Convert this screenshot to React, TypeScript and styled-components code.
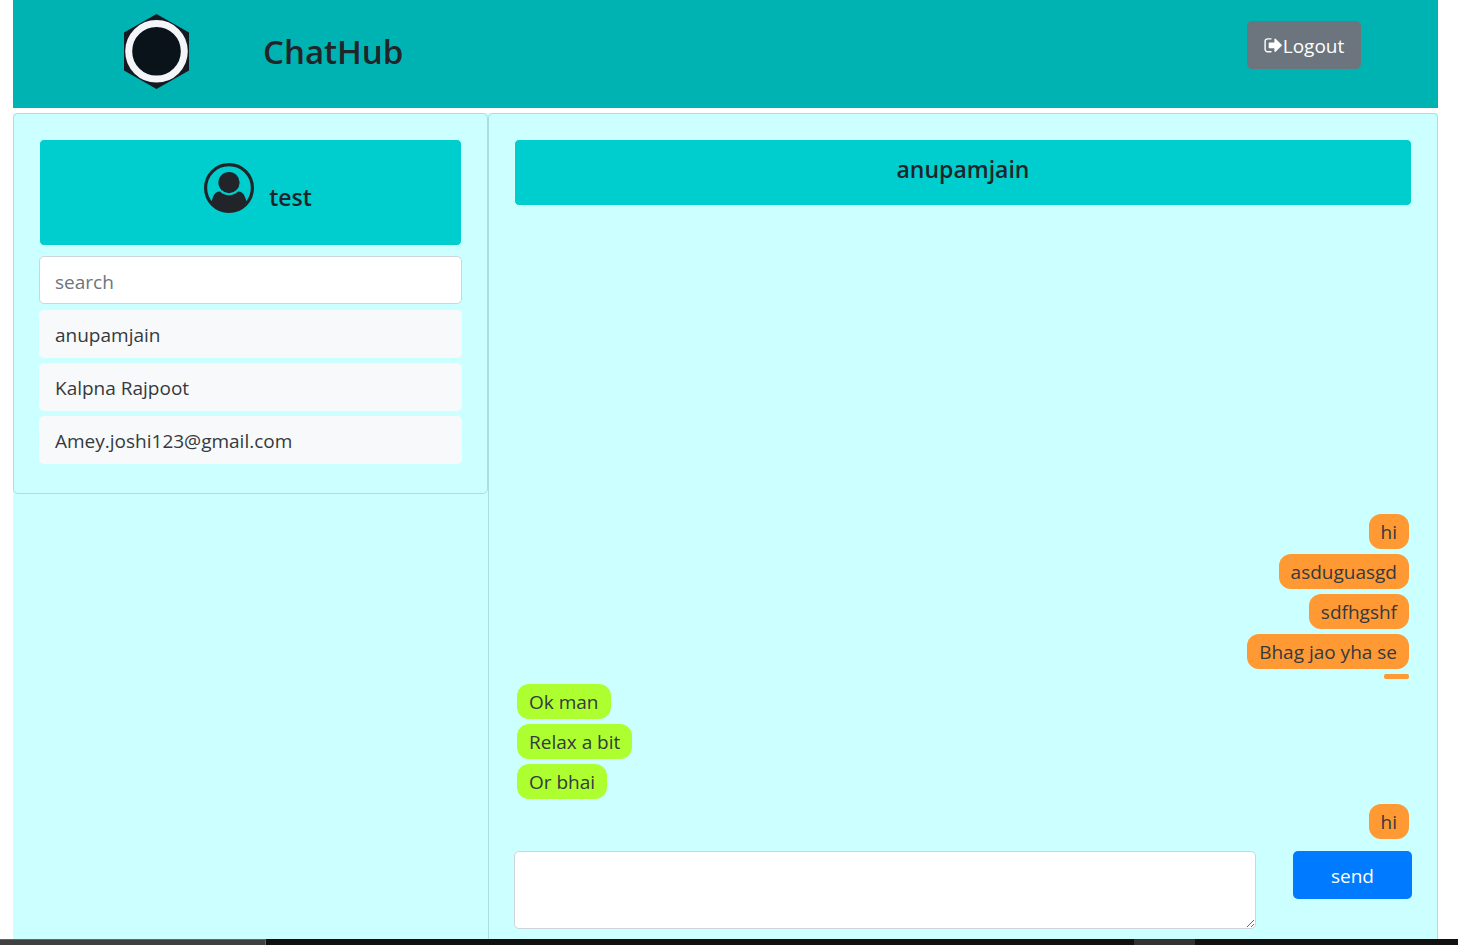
import React, { useState } from 'react';
import styled, { createGlobalStyle } from 'styled-components';

const GlobalStyle = createGlobalStyle`
  *, *::before, *::after { box-sizing: border-box; }
  body {
    margin: 0;
    background: #fff;
    color: #212529;
    font-family: 'Segoe UI', 'Open Sans', 'Noto Sans', sans-serif;
    font-size: 19px;
    line-height: 30px;
  }
  h1, h2, ul { margin: 0; padding: 0; }
  button, input, textarea { font: inherit; }
`;

const Page = styled.div`
  height: 100vh;
  display: flex;
  flex-direction: column;
  overflow: hidden;
`;

const Container = styled.div`
  flex: 1;
  min-height: 0;
  display: flex;
  flex-direction: column;
  gap: 5px;
  margin: 0 20px 0 13px;
`;

const Header = styled.header`
  display: flex;
  align-items: flex-start;
  height: 108px;
  flex-shrink: 0;
  padding: 14px 77px 0 110px;
  background: #00b3b3;
`;

const Logo = styled.svg`
  width: 67px;
  height: 75px;
`;

const Brand = styled.h1`
  margin: 16px auto 0 73px;
  font-size: 33px;
  font-weight: 600;
  line-height: 44px;
`;

const Button = styled.button<{ $tone: string; $width: number }>`
  display: flex;
  align-items: center;
  justify-content: center;
  width: ${(p) => p.$width}px;
  height: 48px;
  padding: 2px 0 0;
  border: 0;
  border-radius: 5px;
  background: ${(p) => p.$tone};
  color: #fff;
`;

const LogoutSlot = styled.div`
  padding-top: 7px;
`;

const Columns = styled.div`
  flex: 1;
  min-height: 0;
  display: grid;
  grid-template-columns: 1fr 2fr;
  align-items: start;
  background: #cff;
`;

const Card = styled.section`
  padding: 25px;
  border: 1px solid #a9dfe0;
  border-radius: 5px;
  background: #cff;
`;

const Sidebar = styled(Card)`
  padding-bottom: 29px;
`;

const Chat = styled(Card)`
  height: 100%;
  display: flex;
  flex-direction: column;
  padding-bottom: 10px;
  border-bottom: 0;
  border-radius: 5px 5px 0 0;
`;

const Banner = styled.div<{ $height: number }>`
  display: flex;
  justify-content: center;
  flex-shrink: 0;
  height: ${(p) => p.$height}px;
  border: 1px solid #d9ffff;
  border-radius: 5px;
  background: #00cdcd;
`;

const Profile = styled(Banner)`
  align-items: flex-start;
  gap: 15px;
  padding: 23px 0 0 15px;
`;

const Name = styled.h2`
  font-size: 23px;
  font-weight: 600;
  line-height: 30px;
`;

const ProfileName = styled(Name)`
  padding-top: 19px;
`;

const PeerName = styled(Name)`
  padding-top: 14px;
`;

const Search = styled.input`
  display: block;
  width: 100%;
  height: 48px;
  margin-top: 10px;
  padding: 4px 15px 0;
  border: 1px solid #ced4da;
  border-radius: 5px;
  background: #fff;
  color: #495057;
  &::placeholder { color: #6c757d; opacity: 1; }
`;

const Contacts = styled.ul`
  display: grid;
  gap: 5px;
  padding-top: 6px;
  list-style: none;
`;

const Contact = styled.button`
  display: block;
  width: 100%;
  height: 48px;
  padding: 1px 16px 0;
  border: 0;
  border-radius: 5px;
  background: #f8f9fa;
  color: #343a40;
  text-align: left;
`;

const Messages = styled.div`
  flex: 1;
  min-height: 0;
  display: flex;
  flex-direction: column;
  justify-content: flex-end;
  gap: 5px;
  padding: 0 3px 12px;
`;

const Bubble = styled.div<{ $mine?: boolean }>`
  align-self: ${(p) => (p.$mine ? 'flex-end' : 'flex-start')};
  flex-shrink: 0;
  min-width: 25px;
  padding: 3px 12px 2px;
  border-radius: 12px;
  background: ${(p) => (p.$mine ? '#ff9933' : '#adff2f')};
  color: #343a40;
  &:empty { border-radius: 2px; }
`;

const Composer = styled.form`
  display: flex;
  align-items: flex-start;
  justify-content: space-between;
  gap: 37px;
`;

const Draft = styled.textarea`
  display: block;
  flex: 1;
  min-width: 0;
  height: 78px;
  padding: 8px 15px;
  border: 1px solid #ced4da;
  border-radius: 5px;
  background: #fff;
  resize: vertical;
`;

const Taskbar = styled.footer`
  display: grid;
  grid-template-columns: 266px 1fr 61px 263px;
  flex-shrink: 0;
  height: 6px;
  background: #101010;
`;

const TaskItem = styled.div<{ $active?: boolean }>`
  grid-column: ${(p) => (p.$active ? 1 : 3)};
  background: ${(p) => (p.$active ? '#404040' : '#333')};
  border: solid #666;
  border-width: ${(p) => (p.$active ? '1px 1px 0 0' : '0')};
`;

const contacts = ['anupamjain', 'Kalpna Rajpoot', 'Amey.joshi123@gmail.com'];

const messages = [
  { text: 'hi', mine: true },
  { text: 'asduguasgd', mine: true },
  { text: 'sdfhgshf', mine: true },
  { text: 'Bhag jao yha se', mine: true },
  { text: '', mine: true },
  { text: 'Ok man' },
  { text: 'Relax a bit' },
  { text: 'Or bhai' },
  { text: 'hi', mine: true },
];

const HexLogo = () => (
  <Logo viewBox="0 0 67 75" aria-hidden="true">
    <path d="M33.5 0 66 18.5v38L33.5 75 1 56.5v-38Z" fill="#151a22" />
    <circle cx="33.5" cy="37.3" r="27.8" fill="#0b131a" stroke="#f4f5f8" strokeWidth="7" />
  </Logo>
);

const LogoutIcon = () => (
  <svg width="19" height="20" viewBox="64 64 1632 1792" fill="currentColor" aria-hidden="true">
    <path d="M704 1440q0 4 1 20t.5 26.5-3 23.5-10 19.5-20.5 6.5h-320q-119 0-203.5-84.5t-84.5-203.5v-704q0-119 84.5-203.5t203.5-84.5h320q13 0 22.5 9.5t9.5 22.5q0 4 1 20t.5 26.5-3 23.5-10 19.5-20.5 6.5h-320q-66 0-113 47t-47 113v704q0 66 47 113t113 47h312l11.5 1 11.5 3 8 5.5 7 9 2 13.5zm928-544q0 26-19 45l-544 544q-19 19-45 19t-45-19-19-45v-288h-448q-26 0-45-19t-19-45v-384q0-26 19-45t45-19h448v-288q0-26 19-45t45-19 45 19l544 544q19 19 19 45z" />
  </svg>
);

const UserIcon = () => (
  <svg width="50" height="50" viewBox="0 0 50 50" fill="#212529" aria-hidden="true">
    <circle cx="25" cy="25" r="23.4" fill="none" stroke="#212529" strokeWidth="3.2" />
    <circle cx="25" cy="19.6" r="10.6" />
    <path d="M6 40C7.500 39 8 37 8.800 34.500C10.200 30.500 12.500 28.600 16 28.600C18.500 31.200 21.500 32.200 25 32.200S31.500 31.200 34 28.600C37.500 28.600 39.800 30.500 41.200 34.500C42 37 42.500 39 44 40C39.500 46 33 49 25 49S10.500 46 6 40Z" />
  </svg>
);

export default function App() {
  const [draft, setDraft] = useState('');
  return (
    <Page>
      <GlobalStyle />
      <Container>
        <Header>
          <HexLogo />
          <Brand>ChatHub</Brand>
          <LogoutSlot>
            <Button type="button" $tone="#6c757d" $width={114}>
              <LogoutIcon />
              Logout
            </Button>
          </LogoutSlot>
        </Header>
        <Columns>
          <Sidebar>
            <Profile $height={107}>
              <UserIcon />
              <ProfileName>test</ProfileName>
            </Profile>
            <Search type="search" placeholder="search" aria-label="search" />
            <Contacts>
              {contacts.map((name) => (
                <li key={name}>
                  <Contact type="button">{name}</Contact>
                </li>
              ))}
            </Contacts>
          </Sidebar>
          <Chat>
            <Banner $height={67}>
              <PeerName>anupamjain</PeerName>
            </Banner>
            <Messages>
              {messages.map((m, i) => (
                <Bubble key={i} $mine={m.mine}>{m.text}</Bubble>
              ))}
            </Messages>
            <Composer onSubmit={(e) => e.preventDefault()}>
              <Draft aria-label="Message" value={draft} onChange={(e) => setDraft(e.target.value)} />
              <Button type="submit" $tone="#007bff" $width={119}>send</Button>
            </Composer>
          </Chat>
        </Columns>
      </Container>
      <Taskbar>
        <TaskItem $active />
        <TaskItem />
      </Taskbar>
    </Page>
  );
}
